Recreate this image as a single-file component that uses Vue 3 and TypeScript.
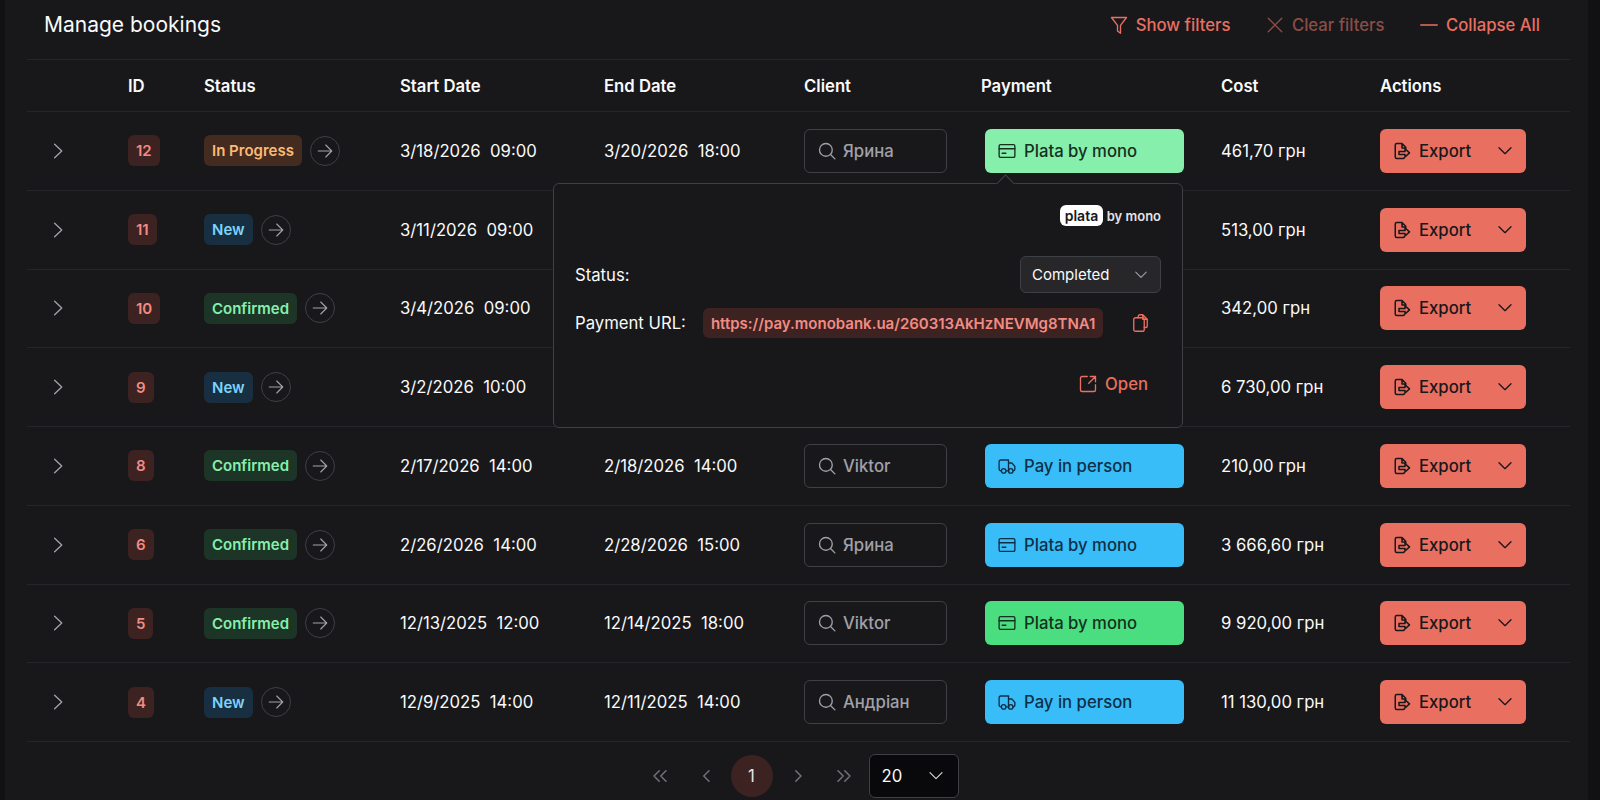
<script setup lang="ts">
interface Row {
  id: number
  status: 'In Progress' | 'New' | 'Confirmed'
  start: string
  end?: string
  client?: string
  pay?: string
  payTone?: string
  cost: string
}

const statusClass: Record<string, string> = {
  'In Progress': 'st-progress',
  New: 'st-new',
  Confirmed: 'st-confirmed',
}

const rows: Row[] = [
  { id: 12, status: 'In Progress', start: '3/18/2026  09:00', end: '3/20/2026  18:00', client: 'Ярина', pay: 'Plata by mono', payTone: 'mint', cost: '461,70 грн' },
  { id: 11, status: 'New', start: '3/11/2026  09:00', cost: '513,00 грн' },
  { id: 10, status: 'Confirmed', start: '3/4/2026  09:00', cost: '342,00 грн' },
  { id: 9, status: 'New', start: '3/2/2026  10:00', cost: '6 730,00 грн' },
  { id: 8, status: 'Confirmed', start: '2/17/2026  14:00', end: '2/18/2026  14:00', client: 'Viktor', pay: 'Pay in person', payTone: 'sky', cost: '210,00 грн' },
  { id: 6, status: 'Confirmed', start: '2/26/2026  14:00', end: '2/28/2026  15:00', client: 'Ярина', pay: 'Plata by mono', payTone: 'sky', cost: '3 666,60 грн' },
  { id: 5, status: 'Confirmed', start: '12/13/2025  12:00', end: '12/14/2025  18:00', client: 'Viktor', pay: 'Plata by mono', payTone: 'green', cost: '9 920,00 грн' },
  { id: 4, status: 'New', start: '12/9/2025  14:00', end: '12/11/2025  14:00', client: 'Андріан', pay: 'Pay in person', payTone: 'sky', cost: '11 130,00 грн' },
]

const heads = ['', 'ID', 'Status', 'Start Date', 'End Date', 'Client', 'Payment', 'Cost', 'Actions']
</script>

<template>
  <div class="page">
    <section class="panel">
      <header class="top">
        <h1 class="title">Manage bookings</h1>
        <div class="tools">
          <button class="tool">
            <svg class="i18" viewBox="0 0 24 24"><path d="M2 2h20l-8 10.500V23l-4-3v-7.500z" /></svg>
            Show filters
          </button>
          <button class="tool dim">
            <svg class="i18" viewBox="0 0 24 24"><path d="M3 3l18 18M21 3L3 21" /></svg>
            Clear filters
          </button>
          <button class="tool">
            <svg class="i18" viewBox="0 0 24 24"><path d="M1 12h22" /></svg>
            Collapse All
          </button>
        </div>
      </header>

      <div class="grid head">
        <div v-for="h in heads" :key="h" class="hcell">{{ h }}</div>
      </div>

      <div v-for="r in rows" :key="r.id" class="grid row">
        <div class="expander">
          <svg class="i18" viewBox="0 0 24 24"><path d="M7.500 3l9.500 9-9.500 9" /></svg>
        </div>
        <div><span class="idtag">{{ r.id }}</span></div>
        <div class="statuscell">
          <span class="st" :class="statusClass[r.status]">{{ r.status }}</span>
          <span class="next">
            <svg viewBox="0 0 24 24"><path d="M3 12h18M13 4l8 8-8 8" /></svg>
          </span>
        </div>
        <div class="date">{{ r.start }}</div>
        <div class="date">{{ r.end }}</div>
        <div>
          <div v-if="r.client" class="client">
            <svg class="i18" viewBox="0 0 24 24"><circle cx="10.500" cy="10.500" r="8.500" /><path d="M17 17l5.500 5.500" /></svg>
            {{ r.client }}
          </div>
        </div>
        <div>
          <button v-if="r.pay" class="pay" :class="r.payTone">
            <svg v-if="r.pay === 'Plata by mono'" class="i18" viewBox="0 0 24 24">
              <rect x="1.500" y="3.500" width="21" height="17" rx="2" /><path d="M1.500 9h21M5.500 15h5" />
            </svg>
            <svg v-else class="i18" viewBox="0 0 24 24">
              <path d="M4 18.500a2.500 2.500 0 0 1-2.500-2.500V6A2 2 0 0 1 3.500 4H14v14.500h-3M14 8h4.500l4 4.500V16a2.500 2.500 0 0 1-2 2.500M14 18.500h.5" />
              <circle cx="7.500" cy="18.500" r="3" /><circle cx="17" cy="18.500" r="3" />
            </svg>
            {{ r.pay }}
          </button>
        </div>
        <div class="cost">{{ r.cost }}</div>
        <div>
          <button class="export">
            <svg class="i18" viewBox="0 0 24 24">
              <path d="M15 20.500a1.500 1.500 0 0 1-1.500 1.500H5a2 2 0 0 1-2-2V4a2 2 0 0 1 2-2h7l5 5v3M12 2v6h5M8 12.500h8V9l6 5.500-6 5.500v-3.500H8z" />
            </svg>
            <span class="exlabel">Export</span>
            <svg class="exchev" viewBox="0 0 24 24"><path d="M3 7l9 9 9-9" /></svg>
          </button>
        </div>
      </div>

      <nav class="pager">
        <span class="pg">
          <svg viewBox="0 0 24 24"><path d="M11 5l-7 7 7 7M20 5l-7 7 7 7" /></svg>
        </span>
        <span class="pg">
          <svg viewBox="0 0 24 24"><path d="M16 5l-7 7 7 7" /></svg>
        </span>
        <span class="pg current">1</span>
        <span class="pg">
          <svg viewBox="0 0 24 24"><path d="M9 5l7 7-7 7" /></svg>
        </span>
        <span class="pg">
          <svg viewBox="0 0 24 24"><path d="M4 5l7 7-7 7M13 5l7 7-7 7" /></svg>
        </span>
        <div class="perpage">
          <span>20</span>
          <svg viewBox="0 0 24 24"><path d="M3 7l9 9 9-9" /></svg>
        </div>
      </nav>

      <aside class="popover">
        <span class="caret"></span>
        <div class="brand">
          <span class="plata">plata</span>
          <span class="bymono"><span>by</span> mono</span>
        </div>
        <div class="pop-row status-row">
          <span>Status:</span>
          <div class="statussel">
            <span>Completed</span>
            <svg viewBox="0 0 24 24"><path d="M3 7l9 9 9-9" /></svg>
          </div>
        </div>
        <div class="pop-row url-row">
          <span>Payment URL:</span>
          <code class="url">https://pay.monobank.ua/260313AkHzNEVMg8TNA1</code>
          <svg class="copy" viewBox="0 0 20 24">
            <path d="M7 5V3a2 2 0 0 1 2-2h4l6 6v9a2 2 0 0 1-2 2h-2M13 1v6h6" />
            <rect x="1" y="5" width="14" height="18" rx="2.500" />
          </svg>
        </div>
        <button class="open">
          <svg class="i18" viewBox="0 0 24 24">
            <path d="M11 2H4a2 2 0 0 0-2 2v16a2 2 0 0 0 2 2h16a2 2 0 0 0 2-2v-7M15 2h7v7M22 2l-9 9" />
          </svg>
          Open
        </button>
      </aside>
    </section>
  </div>
</template>

<style>
html,
body {
  margin: 0;
  background: #111113;
  overflow: hidden;
}
</style>

<style scoped>
* {
  box-sizing: border-box;
}
svg {
  fill: none;
  stroke: currentColor;
  stroke-width: 1.8;
  stroke-linecap: round;
  stroke-linejoin: round;
  flex: none;
}
button {
  font: inherit;
  border: 0;
  background: none;
  cursor: pointer;
}
.i18 {
  width: 18px;
  height: 18px;
}
.page {
  height: 800px;
  padding: 0 12px 0 5px;
  font-family: Inter, "Noto Sans", sans-serif;
  font-size: 16.7px;
  color: #fafafa;
  overflow: hidden;
}
.panel {
  position: relative;
  height: 800px;
  padding: 0 18px 0 22px;
  background: #18181b;
}
.top {
  height: 60px;
  padding: 0 30px 10px 17px;
  border-bottom: 1px solid #26262a;
  display: flex;
  align-items: center;
  justify-content: space-between;
}
.title {
  margin: 0;
  font-size: 21px;
  font-weight: 400;
}
.tools {
  display: flex;
  gap: 35.5px;
}
.tool {
  display: flex;
  align-items: center;
  gap: 8px;
  padding: 0;
  color: #e96f60;
  font-weight: 500;
}
.tool.dim {
  color: #8a4d47;
}
.grid {
  display: grid;
  grid-template-columns: 101px 76px 196px 204px 200px 177px 240px 159px 1fr;
  align-items: center;
  border-bottom: 1px solid #26262a;
}
.head {
  height: 52px;
  font-weight: 600;
}
.row {
  height: 78.75px;
}
.expander {
  padding-left: 22px;
  display: flex;
  color: #a1a1aa;
}
.idtag {
  display: inline-flex;
  align-items: center;
  height: 31px;
  padding: 0 8px;
  border-radius: 6px;
  background: #3d2222;
  color: #f28b82;
  font-size: 15px;
  font-weight: 600;
}
.statuscell {
  display: flex;
  align-items: center;
  gap: 8px;
}
.st {
  display: inline-flex;
  align-items: center;
  height: 31px;
  padding: 0 8px;
  border-radius: 6px;
  font-size: 15px;
  font-weight: 600;
}
.st-progress {
  background: #432b20;
  color: #fdba74;
}
.st-new {
  background: #172f40;
  color: #7dd3fc;
}
.st-confirmed {
  background: #1c3527;
  color: #86efac;
}
.next {
  width: 30px;
  height: 30px;
  border: 1px solid #3f3f46;
  border-radius: 50%;
  display: flex;
  align-items: center;
  justify-content: center;
  color: #a1a1aa;
}
.next svg {
  width: 18px;
  height: 18px;
  stroke-width: 1.5;
}
.date,
.cost {
  white-space: pre;
}
.client {
  width: 143px;
  height: 44px;
  padding: 0 13px;
  display: flex;
  align-items: center;
  gap: 7px;
  border: 1px solid #3f3f46;
  border-radius: 6px;
  color: #a1a1aa;
  font-weight: 500;
}
.pay {
  width: 199px;
  height: 44px;
  margin-left: 3.500px;
  padding: 0 13px;
  display: flex;
  align-items: center;
  gap: 8.500px;
  border-radius: 6px;
  color: #0f2f47;
  font-weight: 500;
}
.pay.mint {
  background: #86efac;
  color: #14301f;
}
.pay.green {
  background: #4ade80;
  color: #14301f;
}
.pay.sky {
  background: #38bdf8;
}
.export {
  width: 146px;
  height: 44px;
  padding: 0 8px 0 13px;
  display: flex;
  align-items: center;
  border-radius: 6px;
  background: #e96f60;
  color: #18181b;
  font-weight: 500;
}
.export svg {
  stroke-width: 2;
}
.exlabel {
  margin-left: 8px;
}
.exchev {
  width: 16px;
  height: 16px;
  margin-left: auto;
  margin-right: 5px;
}
.pager {
  height: 68px;
  display: flex;
  align-items: center;
  justify-content: center;
  gap: 4px;
}
.pg {
  width: 42px;
  height: 42px;
  display: flex;
  align-items: center;
  justify-content: center;
  border-radius: 50%;
  color: #71717a;
}
.pg svg {
  width: 18px;
  height: 18px;
  stroke-width: 2;
}
.pg.current {
  background: #3d2222;
  color: #e4e4e7;
}
.perpage {
  width: 90px;
  height: 44px;
  padding: 0 14px 0 12px;
  display: flex;
  align-items: center;
  justify-content: space-between;
  background: #09090b;
  border: 1px solid #3f3f46;
  border-radius: 6px;
}
.perpage svg {
  width: 16px;
  height: 16px;
  color: #d4d4d8;
}
.popover {
  position: absolute;
  left: 548px;
  top: 183px;
  width: 630px;
  height: 245px;
  padding: 21px 21px 0;
  background: #18181b;
  border: 1px solid #3f3f46;
  border-radius: 6px;
}
.caret {
  position: absolute;
  top: -7px;
  left: 445px;
  width: 13px;
  height: 13px;
  transform: rotate(45deg);
  background: #18181b;
  border-left: 1px solid #3f3f46;
  border-top: 1px solid #3f3f46;
}
.brand {
  display: flex;
  justify-content: flex-end;
  align-items: center;
  gap: 4px;
}
.plata {
  height: 21px;
  padding: 0 4.500px;
  display: flex;
  align-items: center;
  background: #fff;
  color: #18181b;
  border-radius: 6px;
  font-size: 14px;
  font-weight: 600;
}
.bymono {
  font-size: 13px;
  font-weight: 600;
  color: #e4e4e7;
}
.pop-row {
  display: flex;
  align-items: center;
}
.status-row {
  margin-top: 30px;
  justify-content: space-between;
}
.statussel {
  width: 141px;
  height: 37px;
  padding: 0 12px 0 11px;
  display: flex;
  align-items: center;
  justify-content: space-between;
  background: #27272a;
  border: 1px solid #3f3f46;
  border-radius: 6px;
  font-size: 15px;
}
.statussel svg {
  width: 14px;
  height: 14px;
  color: #a1a1aa;
}
.url-row {
  margin-top: 15px;
  gap: 17px;
}
.url {
  height: 30px;
  padding: 0 8px;
  display: flex;
  align-items: center;
  background: #3d2222;
  color: #f28b82;
  border-radius: 6px;
  font-family: Inter, "Noto Sans", sans-serif;
  font-size: 15px;
  font-weight: 600;
}
.copy {
  width: 15px;
  height: 18px;
  margin-left: 13px;
  color: #e96f60;
}
.open {
  margin: 36px 13px 0 auto;
  padding: 0;
  display: flex;
  align-items: center;
  gap: 8px;
  color: #e96f60;
  font-weight: 500;
}
</style>
